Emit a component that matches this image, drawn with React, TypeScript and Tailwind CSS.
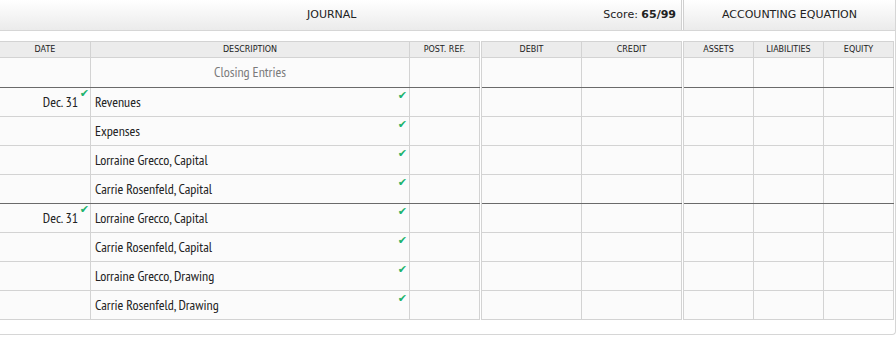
import React from "react";

const body = { fontFamily: '"Liberation Sans Narrow", "PT Sans Narrow", "Roboto", sans-serif' };
const ui = { fontFamily: '"DejaVu Sans", Tahoma, Verdana, sans-serif' };

type Row = { date?: string; desc: string; dark?: boolean; title?: boolean };

const rows: Row[] = [
  { desc: "Closing Entries", title: true, dark: true },
  { date: "Dec. 31", desc: "Revenues" },
  { desc: "Expenses" },
  { desc: "Lorraine Grecco, Capital" },
  { desc: "Carrie Rosenfeld, Capital", dark: true },
  { date: "Dec. 31", desc: "Lorraine Grecco, Capital" },
  { desc: "Carrie Rosenfeld, Capital" },
  { desc: "Lorraine Grecco, Drawing" },
  { desc: "Carrie Rosenfeld, Drawing" },
];

const Check = ({ className }: { className: string }) => (
  <span className={`absolute text-[11px] leading-none text-[#1db36e] ${className}`} style={ui}>
    ✔
  </span>
);

const HeadCell = ({ label, w }: { label: string; w: string }) => (
  <div className={`${w} h-[15px] flex items-center justify-center border-r border-[#d3d3d3] text-[8px] text-[#222]`} style={ui}>
    {label}
  </div>
);

const rowCls = (r: Row, i: number) =>
  `flex ${i === 0 ? "h-[30px]" : "h-[29px]"} border-b ${r.dark ? "border-b-[#6a6a6a]" : "border-b-[#d3d3d3]"}`;

const cell = "border-r border-[#d3d3d3] bg-[#fbfbfb]";

export default function App() {
  return (
    <div className="w-[896px] h-[337px] bg-white overflow-hidden">
      <div className="w-[896px] h-[335px] border-b border-r border-[#d6d6d6] rounded-br-[4px]">
        {/* top bar */}
        <div className="flex h-[31px] border-b border-[#d6d6d6] bg-gradient-to-b from-[#ffffff] to-[#ebebeb] text-[#222]" style={ui}>
          <div className="relative w-[682px] flex items-center border-r border-[#d0d0d0]">
            <span className="absolute left-[307px] text-[11px]">JOURNAL</span>
            <span className="ml-auto mr-[5px] text-[11px]">
              Score: <b>65/99</b>
            </span>
          </div>
          <div className="w-[1px] bg-white" />
          <div className="flex-1 flex items-center justify-center border-l border-[#d0d0d0] text-[11px]">
            ACCOUNTING EQUATION
          </div>
        </div>

        <div className="flex mt-[10px] gap-[1px]">
          {/* journal group */}
          <div className="w-[480px] border-t border-[#d3d3d3]">
            <div className="flex bg-[#ececec] border-b border-[#d3d3d3]">
              <HeadCell label="DATE" w="w-[91px]" />
              <HeadCell label="DESCRIPTION" w="w-[319px]" />
              <HeadCell label="POST. REF." w="w-[70px]" />
            </div>
            {rows.map((r, i) => (
              <div key={i} className={rowCls(r, i)}>
                <div className={`${cell} relative w-[91px] flex items-center justify-end pr-[12px] text-[14px] text-[#222]`} style={body}>
                  {r.date}
                  {r.date && <Check className="top-[0px] right-[1px]" />}
                </div>
                <div
                  className={`${cell} relative w-[319px] flex items-center text-[14px] ${
                    r.title ? "justify-center text-[#7a7a7a]" : "pl-[4px] text-[#222]"
                  }`}
                  style={body}
                >
                  {r.desc}
                  {!r.title && <Check className="top-[2px] right-[2px]" />}
                </div>
                <div className={`${cell} w-[70px]`} />
              </div>
            ))}
          </div>

          {/* debit / credit */}
          <div className="w-[201px] border-t border-l border-[#d3d3d3]">
            <div className="flex bg-[#ececec] border-b border-[#d3d3d3]">
              <HeadCell label="DEBIT" w="w-[100px]" />
              <HeadCell label="CREDIT" w="w-[100px]" />
            </div>
            {rows.map((r, i) => (
              <div key={i} className={rowCls(r, i)}>
                <div className={`${cell} w-[100px]`} />
                <div className={`${cell} w-[100px]`} />
              </div>
            ))}
          </div>

          {/* accounting equation */}
          <div className="w-[211px] border-t border-l border-[#d3d3d3]">
            <div className="flex bg-[#ececec] border-b border-[#d3d3d3]">
              <HeadCell label="ASSETS" w="w-[70px]" />
              <HeadCell label="LIABILITIES" w="w-[70px]" />
              <HeadCell label="EQUITY" w="w-[70px]" />
            </div>
            {rows.map((r, i) => (
              <div key={i} className={rowCls(r, i)}>
                <div className={`${cell} w-[70px]`} />
                <div className={`${cell} w-[70px]`} />
                <div className={`${cell} w-[70px]`} />
              </div>
            ))}
          </div>
        </div>
      </div>
    </div>
  );
}
